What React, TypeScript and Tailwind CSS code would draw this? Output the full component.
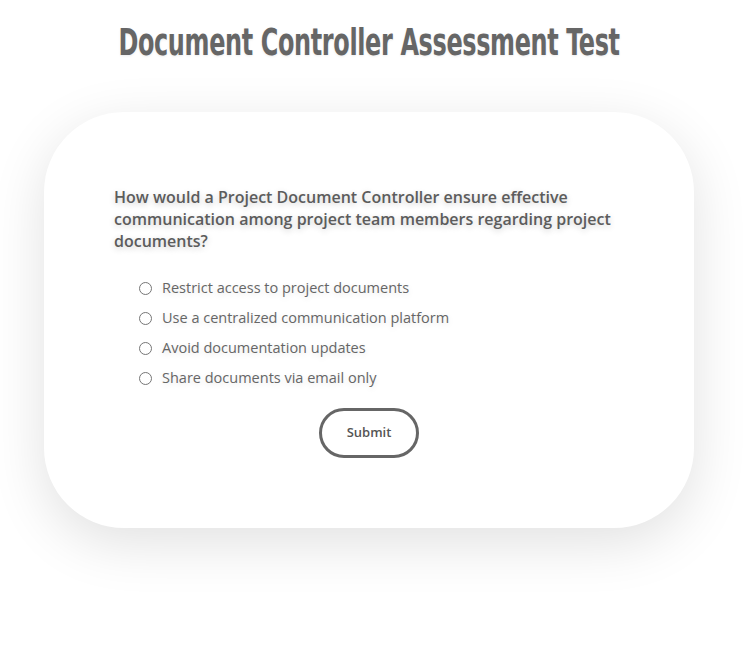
import React from 'react';

const options = [
  'Restrict access to project documents',
  'Use a centralized communication platform',
  'Avoid documentation updates',
  'Share documents via email only',
];

const App: React.FC = () => (
  <div className="min-h-[653px] w-[744px] bg-white font-['Open_Sans',sans-serif] text-[#666]">
    <div className="flex w-[738px] justify-center pt-[18px]">
      <h1 className="inline-block origin-center scale-x-[0.7] whitespace-nowrap font-['DejaVu_Sans_Condensed',sans-serif] text-[38px] font-bold leading-[48px] tracking-[-0.5px] text-[#666] [text-shadow:0_1px_3px_rgba(0,0,0,0.08)]">
        Document Controller Assessment Test
      </h1>
    </div>
    <div className="ml-[44px] mt-[46px] w-[650px] rounded-[80px] bg-white px-[70px] pb-[70px] pt-[74px] shadow-[0_15px_55px_rgba(0,0,0,0.12)]">
      <p className="text-[16px] font-semibold leading-[22px] text-[#5c5c5c] [text-shadow:0_2px_6px_rgba(0,0,0,0.2)]">
        How would a Project Document Controller ensure effective communication among project team members regarding project documents?
      </p>
      <div className="mt-[26px] flex flex-col gap-[10px] pl-[25px]">
        {options.map((o) => (
          <label key={o} className="flex h-[20px] items-center gap-[10px] text-[14.5px] text-[#666] [text-shadow:0_2px_6px_rgba(0,0,0,0.12)]">
            <span className="inline-block h-[13px] w-[13px] rounded-full border border-[#767676] bg-white" />
            {o}
          </label>
        ))}
      </div>
      <div className="mt-[20px] flex justify-center">
        <button className="h-[50px] w-[100px] rounded-full border-[3px] border-[#666] bg-white text-[13px] font-semibold text-[#555]">
          Submit
        </button>
      </div>
    </div>
  </div>
);

export default App;
